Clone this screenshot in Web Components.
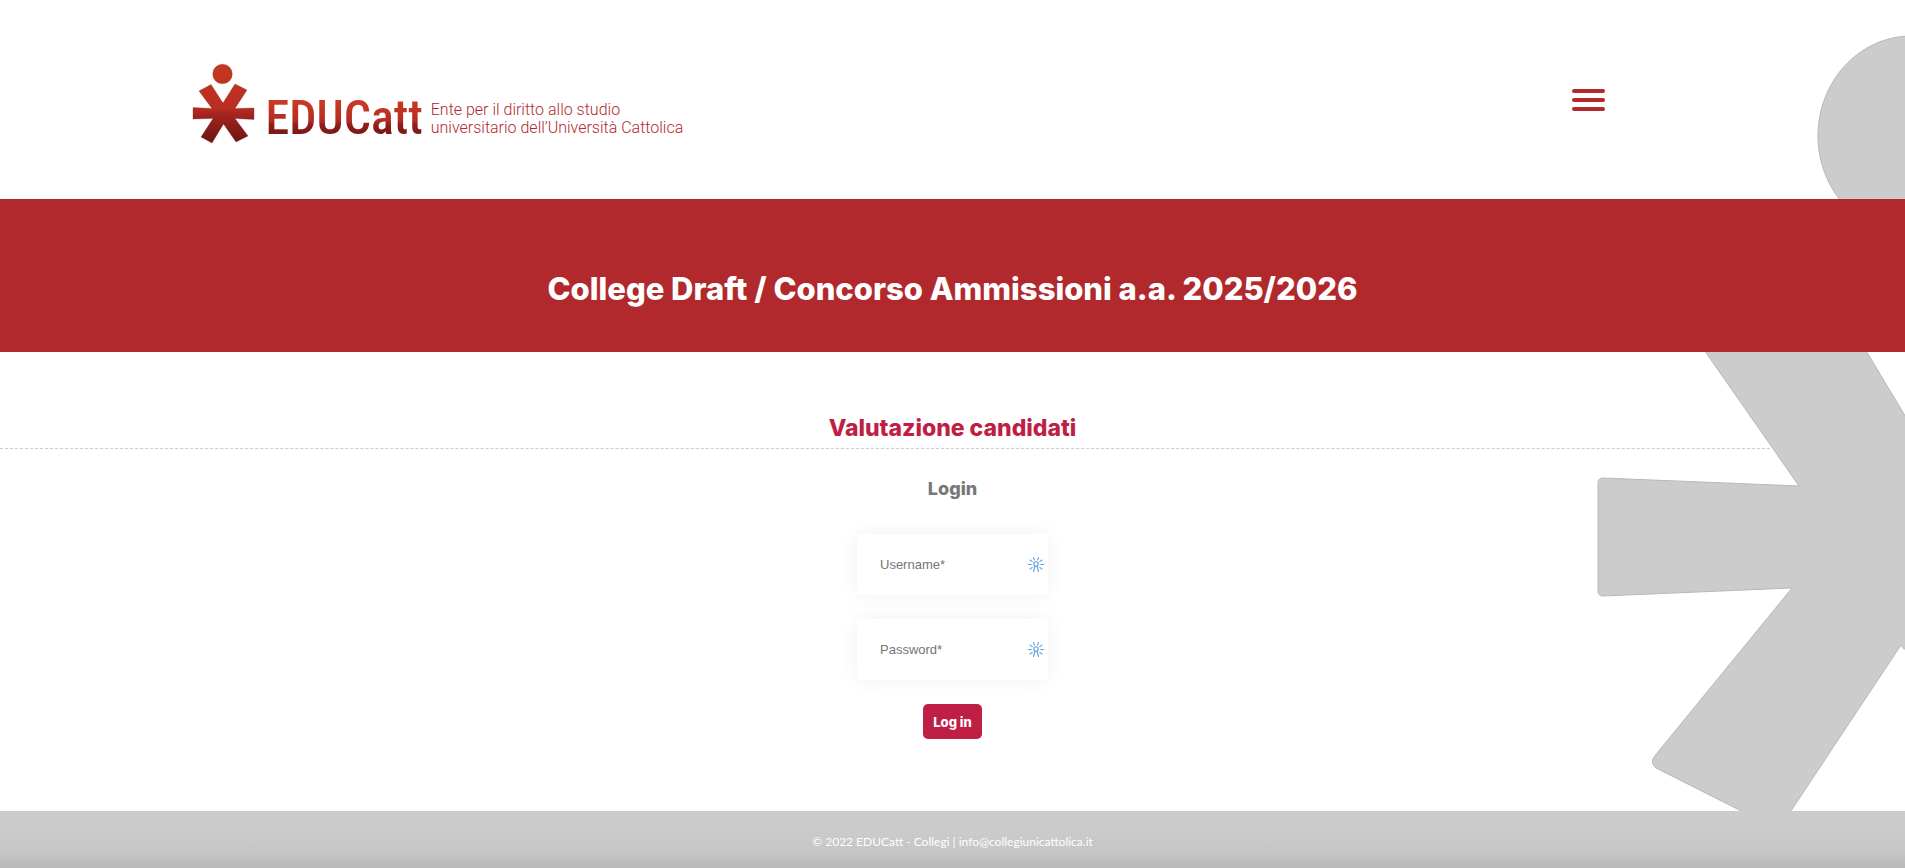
<!DOCTYPE html>
<html lang="it">
<head>
<meta charset="utf-8">
<meta name="viewport" content="width=device-width, initial-scale=1">
<title>College Draft / Concorso Ammissioni</title>
<style>
  body { margin: 0; background: #fff; font-family: Lato, "Open Sans", sans-serif; color: #777; --heading: Inter, Lato, sans-serif; }
</style>
</head>
<body>
<college-page>
  <site-header slot="header"></site-header>
  <title-band>College Draft / Concorso Ammissioni a.a. 2025/2026</title-band>
  <login-panel heading="Valutazione candidati"></login-panel>
  <site-footer slot="footer"></site-footer>
</college-page>

<script>
const define = (name, html, setup) => customElements.define(name, class extends HTMLElement {
  constructor() {
    super();
    this.attachShadow({ mode: 'open' }).innerHTML = html;
  }
  connectedCallback() { if (setup) setup(this, this.shadowRoot); }
});

define('figure-backdrop', `
  <style>
    :host { display: block; position: absolute; top: 0; right: 0; z-index: -1; pointer-events: none; }
    svg { display: block; }
  </style>
  <svg width="320" height="868" viewBox="1585 0 320 868" fill="#ccc" stroke="#b8b8b8" aria-hidden="true">
    <path d="M1910 36C1858 37 1818 82 1818 136C1818 190 1860 236 1910 236Z"/>
    <path d="M1910 424L1850 324H1686L1799 486L1603 478Q1598 478 1598 483V591Q1598 596 1603 596L1792 588L1662 747L1654 757Q1650 763 1656 768L1771 826L1781 826L1901 645L1904 649L1910 649Z"/>
  </svg>`);

define('college-page', `
  <style>
    :host { display: flex; flex-direction: column; position: relative; z-index: 0; min-height: 100vh; overflow: hidden; }
    main { flex: 1; }
  </style>
  <figure-backdrop></figure-backdrop>
  <slot name="header"></slot>
  <main><slot></slot></main>
  <slot name="footer"></slot>`);

define('educatt-logo', `
  <style>
    :host { display: block; }
    a { display: flex; align-items: flex-end; text-decoration: none; color: #b3282d; }
    svg { display: block; }
    .name { margin-left: 11px; font: 500 48px/56px "Roboto Condensed", "Liberation Sans Narrow", "Liberation Sans", sans-serif;
      background: linear-gradient(#c93a24 20%, #b62b22 55%, #8e1f1c 62%, #6a1413 90%);
      -webkit-background-clip: text; background-clip: text; color: transparent; }
    .tag { margin: 0 0 9px 8px; font: 300 16px/18px Roboto, "Liberation Sans", sans-serif; white-space: nowrap; }
  </style>
  <a href="#">
    <svg width="64" height="84" viewBox="191 62 64 84" role="img" aria-label="EDUCatt">
      <defs><linearGradient id="g" gradientUnits="userSpaceOnUse" x1="0" y1="63" x2="0" y2="144">
        <stop offset="0" stop-color="#c7381f"/><stop offset=".55" stop-color="#bb2d22"/>
        <stop offset=".65" stop-color="#a0231e"/><stop offset="1" stop-color="#6c1312"/>
      </linearGradient></defs>
      <g fill="url(#g)" stroke="#6b2a22" stroke-opacity=".5" stroke-width=".6">
        <circle cx="222.500" cy="74" r="9.800"/>
        <path d="M199 91L211 84.500L223 103L235 84L247 90L235 108.500L254 108V119.500L235 118.500L248 136L236 142L223.500 124L212 143L201 137L213 118.500L193 119V107.500L212 108.500Z"/>
      </g>
    </svg>
    <span class="name">EDUCatt</span>
    <span class="tag">Ente per il diritto allo studio<br>universitario dell’Università Cattolica</span>
  </a>`);

define('menu-button', `
  <style>
    :host { display: block; }
    button { display: flex; flex-direction: column; gap: 5px; width: 33px; padding: 0; border: 0; background: none; cursor: pointer; }
    i { display: block; height: 4px; border-radius: 2px; background: #b3292d; }
  </style>
  <button type="button" aria-label="Menu"><i></i><i></i><i></i></button>`);

define('site-header', `
  <style>
    :host { display: block; }
    header { display: flex; justify-content: space-between; align-items: flex-start; padding: 62px 300px 53px 10%; }
    menu-button { margin-top: 27px; }
  </style>
  <header><educatt-logo></educatt-logo><menu-button></menu-button></header>`);

define('title-band', `
  <style>
    :host { display: block; background: #b1292d; color: #fff; padding: 70px 16px 43px; }
    h1 { margin: 0; font: 800 31px/40px var(--heading); text-align: center; }
  </style>
  <h1><slot></slot></h1>`);

define('passkey-icon', `
  <style>:host { display: block; } svg { display: block; }</style>
  <svg width="16" height="16" viewBox="0 0 16 16" fill="none" stroke="#5f9fdc" stroke-width="1.100" stroke-linecap="round" aria-hidden="true">
    <circle cx="8" cy="7" r="2.200"/>
    <path d="M7 9L5.500 14.500M9 9L10.500 14.500M.5 7.500H3.200M12.800 7.500H15.500M2 3L4.200 4.600M14 3L11.800 4.600M5.500 .6L6.400 3M10.500 .6L9.600 3M2 12L4.200 10.400M14 12L11.800 10.400"/>
  </svg>`);

define('text-field', `
  <style>
    :host { display: grid; grid-template-columns: 1fr; align-items: center; width: 191px; background: #fff; box-shadow: 0 0 20px rgba(0,0,0,.06); }
    input { grid-area: 1 / 1; box-sizing: border-box; width: 100%; height: 61px; padding: 0 24px 0 23px; border: 0; background: none;
      font: 13px/16px "Liberation Sans", Arial, sans-serif; color: #444; }
    input::placeholder { color: #757575; opacity: 1; }
    passkey-icon { grid-area: 1 / 1; justify-self: end; margin-right: 4px; }
  </style>
  <input><passkey-icon></passkey-icon>`,
  (el, root) => {
    const input = root.querySelector('input');
    input.type = el.getAttribute('type') || 'text';
    input.placeholder = el.getAttribute('label') + '*';
    input.setAttribute('aria-label', el.getAttribute('label'));
  });

define('login-panel', `
  <style>
    :host { display: block; text-align: center; }
    h2 { margin: 0; padding: 61px 0 4px; border-bottom: 1px dashed #ccc; font: 800 23px/31px var(--heading); color: #bf1e45; }
    h3 { margin: 28px 0 33px; font: 800 18px/24px var(--heading); color: #777; }
    form { display: flex; flex-direction: column; align-items: center; gap: 24px; padding-bottom: 72px; }
    button { height: 35px; padding: 0 10px; border: 0; border-radius: 5px; background: #bf1e45; color: #fff;
      font: 800 13px/20px var(--heading); cursor: pointer; }
  </style>
  <h2></h2>
  <h3>Login</h3>
  <form>
    <text-field label="Username"></text-field>
    <text-field label="Password" type="password"></text-field>
    <button type="submit">Log in</button>
  </form>`,
  (el, root) => { root.querySelector('h2').textContent = el.getAttribute('heading'); });

define('site-footer', `
  <style>
    :host { display: block; }
    footer { padding: 22px 16px 17px; background: linear-gradient(#ccc 30%, #c5c5c5 75%, #b9b9b9); color: #fff; font-size: 12px; line-height: 18px; text-align: center; }
    a { color: inherit; text-decoration: none; }
  </style>
  <footer>© 2022 EDUCatt - Collegi | <a href="mailto:info@collegiunicattolica.it">info@collegiunicattolica.it</a></footer>`);
</script>
</body>
</html>
